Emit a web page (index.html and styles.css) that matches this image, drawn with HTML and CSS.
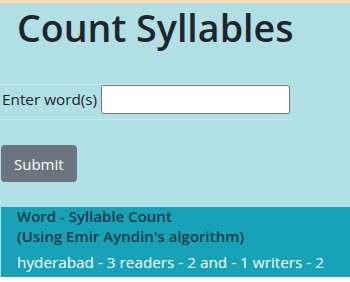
FILE: index.html
```html
<!DOCTYPE html>
<html lang="en">
<head>
    <meta charset="UTF-8">
    <meta name="viewport" content="width=device-width, initial-scale=1.0">
    <title>Count Syllables</title>
<link rel="stylesheet" href="styles.css">
</head>

<body>
    <div class="page">
        <h1 class="title">Count Syllables</h1>
        <form class="word-form">
            <table class="form-table">
                <tr>
                    <td class="label-cell"><label for="words">Enter word(s)</label></td>
                    <td class="input-cell"><input type="text" id="words" name="words"></td>
                </tr>
            </table>
            <button type="submit" class="submit-btn">Submit</button>
        </form>
        <div class="results">
            <div class="results-head">Word - Syllable Count<br>(Using Emir Ayndin's algorithm)</div>
            <div class="results-list">hyderabad - 3 readers - 2 and - 1 writers - 2</div>
        </div>
    </div>
</body>
</html>
```

FILE: styles.css
```css
body {
    margin: 0;
    font-family: "Open Sans", "Noto Sans", sans-serif;
    background-color: #ffffff;
    color: #212529;
    border-top: 3px solid #fddcb3;
}

.page {
    background-color: #b0e0e6;
    display: flow-root;
}

.title {
    margin: 0;
    padding: 0 0 0 17px;
    font-size: 37.6px;
    font-weight: 600;
    line-height: 49px;
}

.word-form {
    margin-top: 32px;
}

.form-table {
    border-collapse: collapse;
}

.form-table td {
    border-top: 1px solid #c6ebef;
    border-bottom: 1px solid #c6ebef;
    padding: 0 1px 5px 2px;
    vertical-align: top;
    font-size: 15.3px;
    line-height: 19px;
}

.form-table .label-cell {
    padding-top: 5px;
}

.form-table .input-cell {
    padding-left: 3px;
}

.form-table input {
    box-sizing: border-box;
    width: 189px;
    height: 29px;
    border: 1px solid #767676;
    border-radius: 2px;
    padding: 1px 3px;
    font-size: 15px;
}

.submit-btn {
    display: block;
    margin: 25px 0 0 1px;
    padding: 0 13px;
    height: 37px;
    background-color: #6c757d;
    color: #ffffff;
    border: none;
    border-radius: 4px;
    font-family: inherit;
    font-size: 15px;
    cursor: pointer;
}

.results {
    margin: 25px 0 0 1px;
    padding: 0 16px 3px;
    background-color: #17a2b8;
}

.results-head {
    font-size: 15px;
    font-weight: 600;
    line-height: 19.5px;
    color: #1d3b44;
}

.results-list {
    margin-top: 4px;
    font-size: 15.3px;
    line-height: 24px;
    color: #ffffff;
}
```
